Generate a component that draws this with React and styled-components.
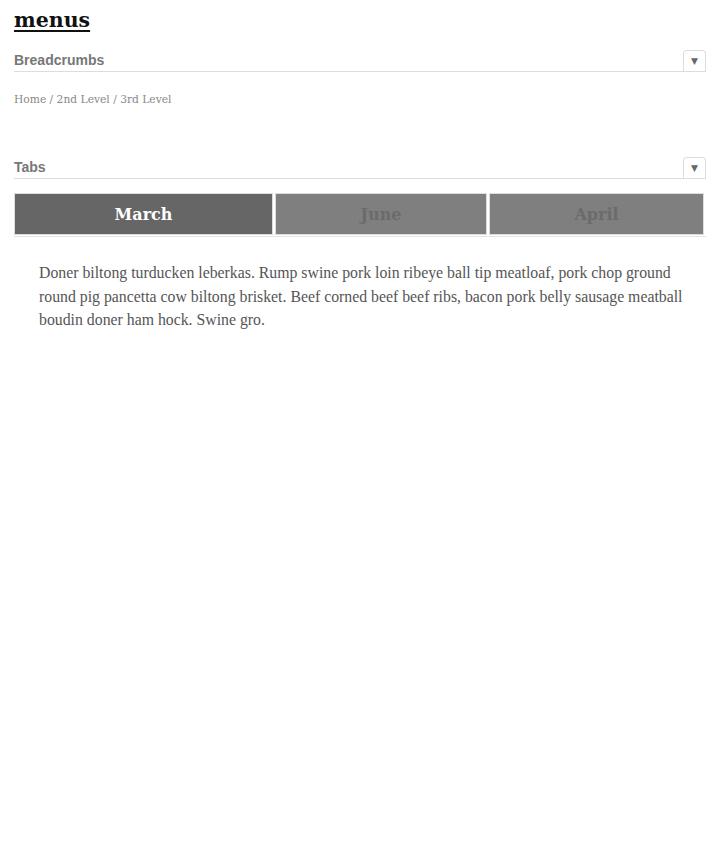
import React from "react";
import styled, { createGlobalStyle } from "styled-components";

const Global = createGlobalStyle`
  body {
    margin: 0;
    background: #fff;
    font-family: "DejaVu Serif", Georgia, serif;
  }
`;

const Page = styled.div`
  padding: 4px 14px 0 14px;
`;

const Title = styled.h1`
  margin: 0 0 13px 0;
  font-family: "DejaVu Serif", Georgia, serif;
  font-size: 20.5px;
  line-height: 32px;
  font-weight: bold;
  color: #111;
  text-decoration: underline;
  text-decoration-thickness: 2px;
  text-underline-offset: 3px;
`;

const Section = styled.section`
  margin-bottom: ${(p) => p.gap || 0}px;
`;

const SectionHead = styled.div`
  display: flex;
  align-items: flex-end;
  justify-content: space-between;
  border-bottom: 1px solid #ddd;
  height: 22px;
`;

const SectionTitle = styled.h2`
  margin: 0 0 3px 0;
  font-family: "Liberation Sans", Arial, sans-serif;
  font-size: 14px;
  font-weight: bold;
  color: #777;
`;

const Toggle = styled.button`
  width: 23px;
  height: 21px;
  padding: 0;
  border: 1px solid #ddd;
  border-bottom: none;
  border-radius: 4px 4px 0 0;
  background: #fff;
  color: #666;
  font-size: 9px;
  line-height: 20px;
  font-family: "DejaVu Sans", sans-serif;
`;

const Crumbs = styled.div`
  margin-top: 21px;
  font-size: 10.7px;
  color: #888;
  font-family: "DejaVu Serif", Georgia, serif;
`;

const TabRow = styled.div`
  display: grid;
  grid-template-columns: 259px 212px 215px;
  gap: 2px;
  margin-top: 14px;
  padding-bottom: 1px;
  border-bottom: 1px solid #e4e4e4;
`;

const Tab = styled.div`
  height: 40px;
  border: 1px solid #ddd;
  background: ${(p) => (p.active ? "#666" : "#7f7f7f")};
  color: ${(p) => (p.active ? "#fff" : "#6b6b6b")};
  display: flex;
  align-items: center;
  justify-content: center;
  font-weight: bold;
  font-size: 16px;
`;

const Body = styled.p`
  margin: 24px 0 0 0;
  padding: 0 11px 0 25px;
  font-family: "Liberation Serif", "Times New Roman", serif;
  font-size: 15.8px;
  line-height: 23.5px;
  color: #555;
`;

const Caret = () => <Toggle>▼</Toggle>;

export default function App() {
  return (
    <Page>
      <Global />
      <Title>menus</Title>
      <Section gap={50}>
        <SectionHead>
          <SectionTitle>Breadcrumbs</SectionTitle>
          <Caret />
        </SectionHead>
        <Crumbs>Home / 2nd Level / 3rd Level</Crumbs>
      </Section>
      <Section>
        <SectionHead>
          <SectionTitle>Tabs</SectionTitle>
          <Caret />
        </SectionHead>
        <TabRow>
          <Tab active>March</Tab>
          <Tab>June</Tab>
          <Tab>April</Tab>
        </TabRow>
        <Body>
          Doner biltong turducken leberkas. Rump swine pork loin ribeye ball
          tip meatloaf, pork chop ground round pig pancetta cow biltong
          brisket. Beef corned beef beef ribs, bacon pork belly sausage
          meatball boudin doner ham hock. Swine gro.
        </Body>
      </Section>
    </Page>
  );
}
